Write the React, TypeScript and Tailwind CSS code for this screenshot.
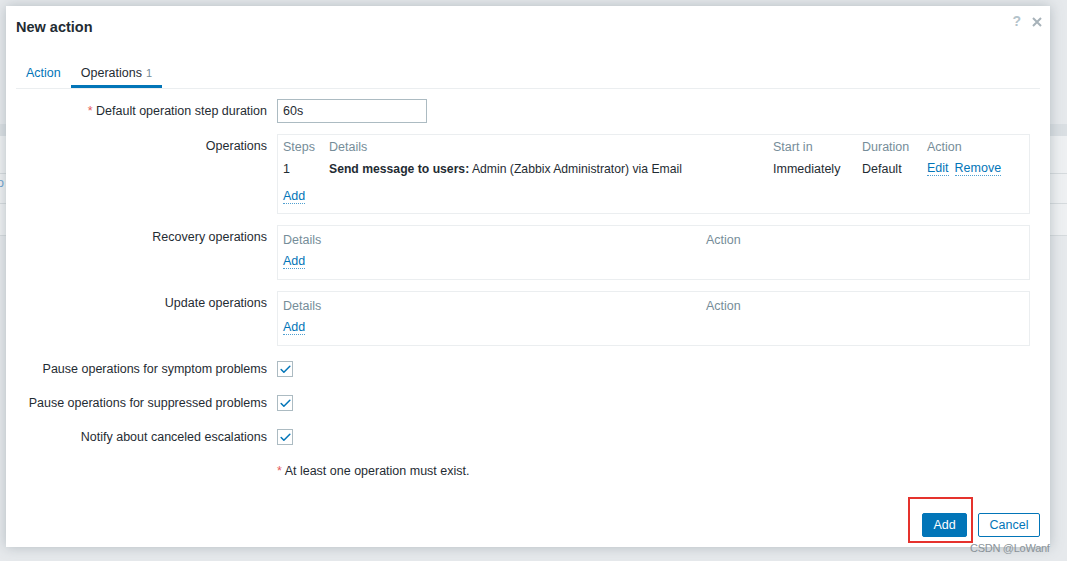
import { Check } from "lucide-react";

const font = { fontFamily: '"Liberation Sans", Arial, sans-serif' };

const DottedLink = ({ children }: { children: string }) => (
  <a className="text-[#0275b8] border-b border-dotted border-[#4f9fd0] leading-[13px] cursor-pointer">{children}</a>
);

const Label = ({ children, top }: { children: React.ReactNode; top?: boolean }) => (
  <div className={`w-[261px] shrink-0 text-right pr-[10px] ${top ? "pt-[3px]" : ""}`}>{children}</div>
);

const CheckRow = ({ label }: { label: string }) => (
  <div className="flex items-center h-[16px]">
    <Label>{label}</Label>
    <div className="w-[16px] h-[16px] border border-[#acbbc2] bg-white flex items-center justify-center">
      <Check size={13} strokeWidth={2.8} className="text-[#0275b8]" />
    </div>
  </div>
);

const EmptyOps = () => (
  <div className="flex-1 mr-[20px] border border-[#ebeef0] pt-[3px] pb-[6px] px-[5px]">
    <div className="flex h-[22px] items-center text-[#768d99]">
      <div className="w-[423px]">Details</div>
      <div>Action</div>
    </div>
    <div className="flex h-[22px] items-center">
      <DottedLink>Add</DottedLink>
    </div>
  </div>
);

export default function App() {
  return (
    <div className="relative w-[1067px] h-[561px] overflow-hidden bg-[#e6e9ec] text-[12.5px] text-[#1f2c33]" style={font}>
      {/* page underneath the overlay */}
      <div className="flex flex-col">
        <div className="h-[124px]" />
        <div className="h-[12px] bg-[#dadfe3]" />
        <div className="h-[38px] border-b border-[#d5dadd] bg-[#eef0f2]" />
        <div className="h-[30px] border-b border-[#d5dadd] bg-[#eef0f2] text-[#6fa3d0]">
          <span className="relative -left-[3px]">o</span>
        </div>
        <div className="h-[32px] border-b border-[#d5dadd] bg-[#eef0f2]" />
      </div>

      {/* dialog */}
      <div className="absolute left-[6px] top-[6px] w-[1044px] h-[541px] bg-white shadow-[0_0_12px_rgba(90,105,115,0.35)] flex flex-col">
        <div className="relative px-[10px] pt-[13px]">
          <h4 className="text-[14.5px] font-bold leading-[16px]">New action</h4>
          <div className="absolute right-[8px] top-[5px] flex items-center gap-[11px] text-[#b4c3cb]">
            <span className="text-[14px] font-bold">?</span>
            <svg width="10" height="10" viewBox="0 0 10 10">
              <path d="M1 1L9 9M9 1L1 9" stroke="#a7b2b9" strokeWidth="2" />
            </svg>
          </div>
        </div>

        <div className="mx-[10px] mt-[23px] flex border-b border-[#ebeef0]">
          <div className="px-[10px] h-[30px] flex items-center text-[#0275b8]">Action</div>
          <div className="px-[10px] h-[30px] flex items-center border-b-[3px] border-[#0275b8] pt-[3px]">
            Operations <span className="ml-[4px] text-[#768d99] text-[11px]">1</span>
          </div>
        </div>

        <div className="pl-[10px] flex flex-col">
          <div className="flex items-center mt-[10px]">
            <Label>
              <span className="text-[#e45959]">*</span> Default operation step duration
            </Label>
            <div className="w-[150px] h-[24px] border border-[#acbbc2] px-[5px] flex items-center">60s</div>
          </div>

          <div className="flex items-start mt-[11px]">
            <Label top>Operations</Label>
            <div className="flex-1 mr-[20px] border border-[#ebeef0] pt-[1px] pb-[5px] px-[5px]">
              <div className="flex h-[22px] items-center text-[#768d99]">
                <div className="w-[46px]">Steps</div>
                <div className="w-[444px]">Details</div>
                <div className="w-[89px]">Start in</div>
                <div className="w-[65px]">Duration</div>
                <div>Action</div>
              </div>
              <div className="flex h-[22px] items-center">
                <div className="w-[46px]">1</div>
                <div className="w-[444px] text-[12.2px]">
                  <b>Send message to users:</b> Admin (Zabbix Administrator) via Email
                </div>
                <div className="w-[89px]">Immediately</div>
                <div className="w-[65px]">Default</div>
                <div className="flex gap-[6px]">
                  <DottedLink>Edit</DottedLink>
                  <DottedLink>Remove</DottedLink>
                </div>
              </div>
              <div className="flex h-[22px] items-center mt-[6px]">
                <DottedLink>Add</DottedLink>
              </div>
            </div>
          </div>

          <div className="flex items-start mt-[11px]">
            <Label top>Recovery operations</Label>
            <EmptyOps />
          </div>

          <div className="flex items-start mt-[11px]">
            <Label top>Update operations</Label>
            <EmptyOps />
          </div>

          <div className="flex flex-col gap-[18px] mt-[15px]">
            <CheckRow label="Pause operations for symptom problems" />
            <CheckRow label="Pause operations for suppressed problems" />
            <CheckRow label="Notify about canceled escalations" />
          </div>

          <div className="flex mt-[18px] h-[16px] items-center">
            <div className="w-[261px] shrink-0" />
            <div>
              <span className="text-[#e45959]">*</span> At least one operation must exist.
            </div>
          </div>
        </div>

        <div className="mt-auto flex justify-end gap-[11px] pr-[10px] pb-[10px]">
          <div className="relative">
            <button className="w-[45px] h-[24px] bg-[#0275b8] text-white rounded-[2px] border border-[#0275b8]">Add</button>
            <div className="absolute left-[-14px] top-[-16px] w-[65px] h-[46px] border-2 border-[#e5322d]" />
          </div>
          <button className="w-[62px] h-[24px] bg-white text-[#0275b8] rounded-[2px] border border-[#0275b8]">Cancel</button>
        </div>
      </div>

      <div className="absolute left-[970px] top-[540px] text-[11px] text-[#8a9399] tracking-tight">CSDN @LoWanf</div>
    </div>
  );
}
